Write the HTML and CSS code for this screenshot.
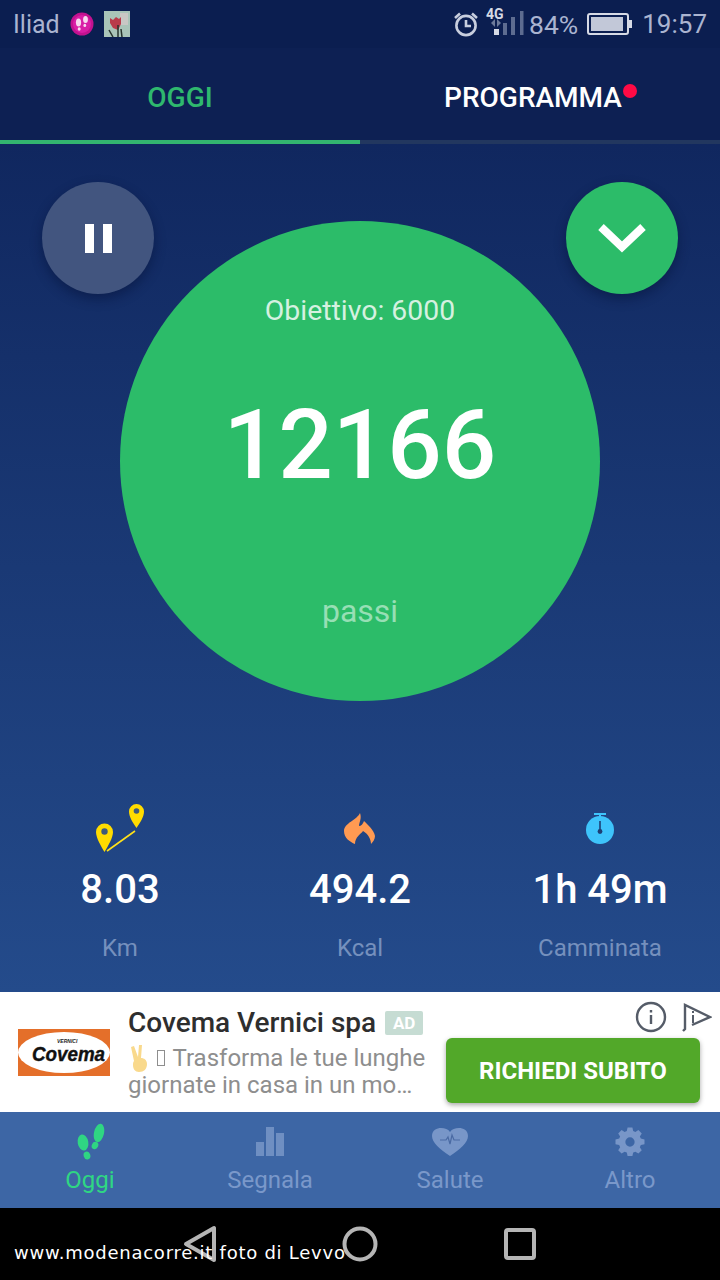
FILE: index.html
```html
<!doctype html>
<html>
<head>
  <meta charset="utf-8">
  <title>Oggi</title>
  <link rel="stylesheet" href="styles.css">
</head>
<body>
  <div class="phone">
    <header class="statusbar">
      <div class="status-left">
        <span class="carrier">Iliad</span>
        <svg class="notif-app" viewBox="0 0 24 24" width="24" height="24">
          <circle cx="12" cy="12" r="11.5" fill="#c2128f"/>
          <circle cx="12" cy="12" r="9" fill="#d91ea6"/>
          <ellipse cx="8.5" cy="10.5" rx="2.6" ry="4" fill="#f7d9ee"/>
          <ellipse cx="9.2" cy="17" rx="1.5" ry="1.8" fill="#f7d9ee"/>
          <ellipse cx="15.5" cy="7.5" rx="2.4" ry="3.6" fill="#f7d9ee"/>
          <ellipse cx="14.8" cy="13.4" rx="1.4" ry="1.7" fill="#f7d9ee"/>
        </svg>
        <svg class="notif-photo" viewBox="0 0 26 26" width="26" height="26">
          <rect width="26" height="26" fill="#a9c4b8"/>
          <rect x="16" y="2" width="8" height="12" fill="#c9c7c4"/>
          <path d="M6 7l3 2 3-3 3 2 2-2 0 7-3 6-5-2-3-5z" fill="#b93a4a"/>
          <path d="M14 14v12M5 19l4 7M17 18l1 8" stroke="#26332c" stroke-width="1.5" fill="none"/>
        </svg>
      </div>
      <div class="status-right">
        <svg class="alarm" viewBox="0 0 26 26" width="26" height="26" fill="none" stroke="#c8cede" stroke-width="2.600">
          <circle cx="13" cy="14.5" r="9.6"/>
          <path d="M13 9v6h5"/>
          <path d="M2 7l5-4.500M24 7l-5-4.500"/>
        </svg>
        <div class="signal">
          <span class="signal-4g">4G</span>
          <svg viewBox="0 0 38 38" width="38" height="38">
            <path d="M9 14l-4 4 4 4zM11 14l4 4-4 4z" fill="#6d7a9a"/>
            <rect x="8" y="24" width="5" height="6" fill="#d6dae5"/>
            <rect x="17" y="18" width="4" height="12" fill="#5d6c90"/>
            <rect x="25" y="12" width="4" height="18" fill="#5d6c90"/>
            <rect x="34" y="6" width="3.500" height="24" fill="#5d6c90"/>
          </svg>
        </div>
        <span class="percent">84%</span>
        <div class="battery"><div class="battery-fill"></div></div>
        <span class="clock">19:57</span>
      </div>
    </header>

    <nav class="tabs">
      <div class="tab tab-active">OGGI</div>
      <div class="tab"><span class="tab-label">PROGRAMMA<i class="dot"></i></span></div>
    </nav>

    <main class="today">
      <div class="dial-area">
        <button class="round round-pause"><i></i><i></i></button>
        <button class="round round-down">
          <svg viewBox="0 0 48 32" width="48" height="32" fill="none" stroke="#fff" stroke-width="8"><path d="M3 5l21 20L45 5"/></svg>
        </button>
        <div class="dial">
          <div class="goal">Obiettivo: 6000</div>
          <div class="steps">12166</div>
          <div class="unit">passi</div>
        </div>
      </div>

      <section class="stats">
        <div class="stat">
          <svg class="stat-icon" viewBox="0 0 60 56" width="60" height="56">
            <path d="M17 51L45 31" stroke="#ffe11a" stroke-width="1.600" fill="none"/>
            <path d="M14.500 52C11 46 6 38 6 32a8.500 8.500 0 0 1 17 0c0 6-5 14-8.500 20z" fill="#ffdc00"/>
            <circle cx="14.500" cy="31.500" r="3.200" fill="#3f5a7a"/>
            <path d="M46.500 28C43 23 39 17 39 11.500a7.500 7.500 0 0 1 15 0c0 5.500-4 11.500-7.500 16.500z" fill="#ffdc00"/>
            <circle cx="46.500" cy="11" r="2.800" fill="#3f5a7a"/>
          </svg>
          <div class="stat-value">8.03</div>
          <div class="stat-label">Km</div>
        </div>
        <div class="stat">
          <svg class="stat-icon" viewBox="0 0 60 56" width="60" height="56">
            <path d="M30 13c2 6-1 9-1 13 2 0 4-2 5-5 4 4 10 9 11 15 0 3-2 6-4 8 0-5-3-10-8-13-2 3-8 6-8 13-5-2-11-6-11-13 0-8 13-11 16-18z" fill="#ff9a52"/>
          </svg>
          <div class="stat-value">494.2</div>
          <div class="stat-label">Kcal</div>
        </div>
        <div class="stat">
          <svg class="stat-icon" viewBox="0 0 60 56" width="60" height="56">
            <rect x="24" y="13" width="12" height="2" fill="#3ec4fb"/>
            <rect x="29" y="14" width="2" height="4" fill="#3ec4fb"/>
            <circle cx="30" cy="30" r="14" fill="#3ec4fb"/>
            <rect x="29.200" y="21" width="1.600" height="10" fill="#1d3f74"/>
            <circle cx="30" cy="31.500" r="2.400" fill="#1d3f74"/>
          </svg>
          <div class="stat-value">1h 49m</div>
          <div class="stat-label">Camminata</div>
        </div>
      </section>
    </main>

    <aside class="ad">
      <div class="ad-logo">
        <svg viewBox="0 0 92 47" width="92" height="47">
          <rect width="92" height="47" fill="#e46f2a"/>
          <ellipse cx="46" cy="23.500" rx="46" ry="20.500" fill="#fff"/>
          <text class="ad-logo-small" x="39" y="14">VERNICI</text>
          <text class="ad-logo-name" x="14" y="32" textLength="73" lengthAdjust="spacingAndGlyphs">Covema</text>
        </svg>
      </div>
      <div class="ad-copy">
        <div class="ad-title">Covema Vernici spa <span class="ad-tag">AD</span></div>
        <div class="ad-text">
          <svg class="ad-hand" viewBox="0 0 18 27" width="18" height="27" fill="#f9d98c">
            <path d="M1 2l3-1 4 11 1-12h3l-1 13c3 0 6 2 6 6 0 5-3 8-8 8-4 0-6-3-6-7 0-1 0-3 1-4z"/>
          </svg><span class="ad-missing"></span> Trasforma le tue lunghe<br>giornate in casa in un mo…
        </div>
      </div>
      <div class="ad-side">
        <div class="ad-icons">
          <svg viewBox="0 0 32 32" width="32" height="32" fill="none" stroke="#555c68" stroke-width="2.400">
            <circle cx="16" cy="16" r="14"/>
            <path d="M16 14v9M16 9v2.600"/>
          </svg>
          <svg viewBox="0 0 32 32" width="32" height="32" fill="none" stroke="#555c68" stroke-width="2.400">
            <path d="M3 30l2-2V4l25 12-18 8"/>
            <path d="M13 14v8M13 10v2" stroke-width="2"/>
          </svg>
        </div>
        <button class="cta">RICHIEDI SUBITO</button>
      </div>
    </aside>

    <nav class="bottom-nav">
      <div class="nav-item nav-active">
        <svg viewBox="0 0 34 38" width="34" height="38" fill="#2fd683">
          <ellipse cx="10" cy="19.500" rx="5.300" ry="8" transform="rotate(-10 10 19.500)"/>
          <ellipse cx="14" cy="32.500" rx="3.300" ry="4" transform="rotate(-20 14 32.500)"/>
          <ellipse cx="26" cy="10" rx="5" ry="9.500" transform="rotate(12 26 10)"/>
          <ellipse cx="22" cy="22.500" rx="3.200" ry="3.800" transform="rotate(25 22 22.500)"/>
        </svg>
        <span>Oggi</span>
      </div>
      <div class="nav-item">
        <svg viewBox="0 0 34 38" width="34" height="38" fill="#6f8fc2">
          <rect x="3" y="19" width="8" height="14"/>
          <rect x="13" y="4" width="8" height="29"/>
          <rect x="23" y="10" width="8" height="23"/>
        </svg>
        <span>Segnala</span>
      </div>
      <div class="nav-item">
        <svg viewBox="0 0 36 38" width="36" height="38">
          <path d="M18 33C8 26 0 20 0 13 0 7 5 5 9 5c4 0 7 1 9 4 2-3 5-4 9-4 4 0 9 2 9 8 0 7-8 13-18 20z" fill="#7896c8"/>
          <path d="M8 17h6l2-3 2 7 2-9 2 5h6" stroke="#4a6aa3" stroke-width="1.200" fill="none"/>
        </svg>
        <span>Salute</span>
      </div>
      <div class="nav-item">
        <svg viewBox="0 0 30 30" width="38" height="38" fill="#7896c8">
          <path fill-rule="evenodd" d="M12.500 0h5l.8 3.600 2.300 1 3.100-2 3.500 3.500-2 3.100 1 2.300 3.800.8v5l-3.800.8-1 2.300 2 3.100-3.500 3.500-3.100-2-2.300 1-.8 3.500h-5l-.8-3.500-2.300-1-3.100 2-3.500-3.500 2-3.100-1-2.300L0 17.300v-5l3.800-.8 1-2.300-2-3.100 3.500-3.500 3.100 2 2.300-1zM15 10.200a4.800 4.800 0 1 0 0 9.600 4.800 4.800 0 0 0 0-9.600z" transform="translate(3.550 3.550) scale(.763)"/>
        </svg>
        <span>Altro</span>
      </div>
    </nav>

    <footer class="softkeys">
      <svg viewBox="0 0 34 38" width="34" height="38" fill="none" stroke="#b5b5b5" stroke-width="4"><path d="M31 3v32L3 19z" stroke-linejoin="round"/></svg>
      <svg viewBox="0 0 36 36" width="36" height="36" fill="none" stroke="#b5b5b5" stroke-width="4"><circle cx="18" cy="18" r="15.500"/></svg>
      <svg viewBox="0 0 32 32" width="32" height="32" fill="none" stroke="#b5b5b5" stroke-width="4"><rect x="2" y="2" width="28" height="28" rx="2"/></svg>
    </footer>

    <div class="watermark">www.modenacorre.it foto di Levvo</div>
  </div>
</body>
</html>
```

FILE: styles.css
```css
* {
  box-sizing: border-box;
}
html, body {
  margin: 0;
  padding: 0;
}
body {
  background: #000;
  font-family: Roboto, "Noto Sans", sans-serif;
}
svg {
  display: block;
  flex: none;
}
.phone {
  position: relative;
  width: 720px;
  height: 1280px;
  display: flex;
  flex-direction: column;
  overflow: hidden;
}

/* status bar */
.statusbar {
  height: 48px;
  padding: 0 13px 0 13px;
  background: #0b1e50;
  display: flex;
  justify-content: space-between;
  align-items: center;
  color: #aab4d0;
  font-size: 26px;
}
.status-left, .status-right {
  display: flex;
  align-items: center;
}
.carrier {
  margin-right: 10px;
  font-size: 25px;
}
.notif-photo {
  margin-left: 10px;
}
.signal {
  position: relative;
  width: 38px;
  height: 38px;
  margin-left: 7px;
}
.signal-4g {
  position: absolute;
  left: 0;
  top: 1px;
  font-size: 14px;
  line-height: 16px;
  font-weight: 700;
  color: #d6dae5;
}
.percent {
  margin-left: 5px;
  font-size: 26.5px;
}
.battery {
  position: relative;
  width: 42px;
  height: 22px;
  margin-left: 9px;
  border: 2px solid #d6dae5;
  border-radius: 3px;
  padding: 2px;
}
.battery::after {
  content: "";
  position: absolute;
  right: -5px;
  top: 5px;
  width: 3px;
  height: 8px;
  background: #d6dae5;
}
.battery-fill {
  width: 92%;
  height: 100%;
  background: #c2c8d8;
}
.clock {
  margin-left: 13px;
}

/* tabs */
.tabs {
  height: 96px;
  background: #0d2053;
  display: flex;
  flex: none;
}
.tab {
  width: 360px;
  display: flex;
  justify-content: center;
  align-items: center;
  padding-top: 6px;
  font-size: 28px;
  font-weight: 500;
  color: #fff;
  border-bottom: 4px solid #22375f;
}
.tab-active {
  color: #2fb86e;
  border-bottom-color: #33b56f;
}
.tab-label {
  position: relative;
  margin-right: 14px;
}
.dot {
  position: absolute;
  right: -15px;
  top: 3px;
  width: 14px;
  height: 14px;
  border-radius: 50%;
  background: #ff0a45;
}

/* main */
.today {
  flex: 1;
  background: linear-gradient(#10275f, #244b8b);
  display: flex;
  flex-direction: column;
}
.dial-area {
  position: relative;
  height: 656px;
  padding-top: 77px;
}
.dial {
  width: 480px;
  height: 480px;
  margin: 0 auto;
  border-radius: 50%;
  background: #2cbc69;
  display: flex;
  flex-direction: column;
  align-items: center;
  color: #fff;
}
.goal {
  margin-top: 72px;
  font-size: 28.4px;
  line-height: 36px;
  color: #d5f1e0;
}
.steps {
  margin-top: 60px;
  font-size: 96px;
  line-height: 112px;
  font-weight: 500;
}
.unit {
  margin-top: 90px;
  font-size: 32px;
  line-height: 40px;
  color: #97dfb5;
}
.round {
  position: absolute;
  top: 38px;
  z-index: 1;
  width: 112px;
  height: 112px;
  padding: 0;
  border: 0;
  border-radius: 50%;
  display: flex;
  justify-content: center;
  align-items: center;
  box-shadow: 0 5px 12px rgba(5, 15, 50, 0.45);
}
.round-pause {
  left: 42px;
  gap: 9px;
  padding-left: 1px;
  background: #42557f;
}
.round-pause i {
  width: 9px;
  height: 29px;
  background: #fff;
}
.round-down {
  right: 42px;
  background: #2cbc69;
}

/* stats */
.stats {
  display: flex;
}
.stat {
  width: 240px;
  display: flex;
  flex-direction: column;
  align-items: center;
}
.stat-icon {
  height: 56px;
}
.stat-value {
  margin-top: 11px;
  font-size: 40px;
  line-height: 46px;
  font-weight: 500;
  color: #fff;
}
.stat-label {
  margin-top: 19px;
  font-size: 24px;
  line-height: 32px;
  color: #7590bd;
}

/* ad */
.ad {
  height: 120px;
  flex: none;
  background: #fff;
  display: flex;
}
.ad-logo {
  width: 128px;
  padding: 37px 0 0 18px;
}
.ad-logo-small {
  font: 700 italic 5px "Liberation Sans", sans-serif;
  fill: #222;
}
.ad-logo-name {
  font: 700 italic 20px "Liberation Sans", sans-serif;
  fill: #111;
  stroke: #111;
  stroke-width: 0.4px;
}
.ad-copy {
  width: 318px;
  padding-top: 13px;
}
.ad-title {
  display: flex;
  align-items: center;
  gap: 9px;
  font-size: 28px;
  line-height: 36px;
  font-weight: 500;
  color: #2e2e2e;
}
.ad-tag {
  width: 38px;
  height: 24px;
  border-radius: 2px;
  background: #c6dcd3;
  color: #fff;
  font-size: 17px;
  line-height: 24px;
  font-weight: 700;
  text-align: center;
}
.ad-text {
  font-size: 24px;
  line-height: 27px;
  margin-top: 4px;
  color: #8e8e8e;
}
.ad-hand {
  display: inline-block;
  margin-left: 2px;
  vertical-align: -6px;
}
.ad-missing {
  display: inline-block;
  width: 8px;
  height: 16px;
  margin: 0 2px 0 9px;
  border: 1px solid #8e8e8e;
}
.ad-side {
  width: 274px;
  display: flex;
  flex-direction: column;
}
.ad-icons {
  display: flex;
  justify-content: flex-end;
  gap: 13px;
  padding: 9px 8px 0 0;
  height: 46px;
}
.cta {
  width: 254px;
  height: 65px;
  padding: 0;
  border: 0;
  border-radius: 6px;
  background: #52a829;
  color: #fff;
  font-family: Roboto, sans-serif;
  font-size: 24px;
  font-weight: 700;
  box-shadow: 0 2px 5px rgba(0, 0, 0, 0.35);
}

/* bottom nav */
.bottom-nav {
  height: 96px;
  flex: none;
  background: #3d66a5;
  display: flex;
}
.nav-item {
  width: 180px;
  display: flex;
  flex-direction: column;
  align-items: center;
  padding-top: 11px;
  font-size: 24px;
  line-height: 32px;
  color: #7a98ca;
}
.nav-item span {
  margin-top: 3px;
}
.nav-active {
  color: #2fd683;
}

/* soft keys */
.softkeys {
  height: 72px;
  flex: none;
  background: #000;
  display: flex;
  align-items: center;
}
.softkeys svg:nth-child(1) {
  margin-left: 183px;
}
.softkeys svg:nth-child(2) {
  margin-left: 125px;
}
.softkeys svg:nth-child(3) {
  margin-left: 126px;
}

.watermark {
  position: absolute;
  left: 14px;
  top: 1241px;
  font-family: "DejaVu Sans", sans-serif;
  font-size: 18px;
  letter-spacing: 0.75px;
  line-height: 24px;
  color: #fff;
  white-space: nowrap;
}
```
